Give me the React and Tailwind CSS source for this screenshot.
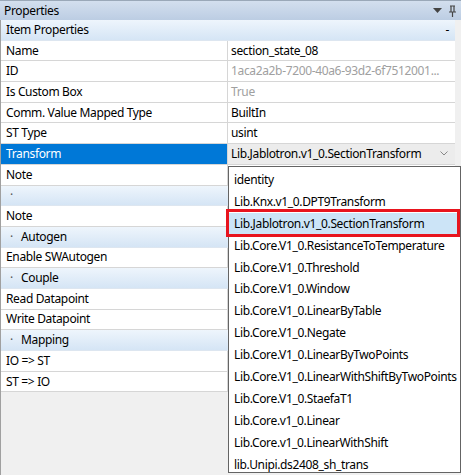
import React from "react";

const rows = [
  { t: "cat", label: "Item Properties", minus: true },
  { label: "Name", value: "section_state_08" },
  { label: "ID", value: "1aca2a2b-7200-40a6-93d2-6f7512001...", dim: true },
  { label: "Is Custom Box", value: "True", dim: true },
  { label: "Comm. Value Mapped Type", value: "BuiltIn" },
  { label: "ST Type", value: "usint" },
  { label: "Transform", value: "Lib.Jablotron.v1_0.SectionTransform", sel: true },
  { label: "Note", value: "" },
  { t: "cat", label: "", dot: true },
  { label: "Note", value: "" },
  { t: "cat", label: "Autogen", dot: true },
  { label: "Enable SWAutogen", value: "" },
  { t: "cat", label: "Couple", dot: true },
  { label: "Read Datapoint", value: "" },
  { label: "Write Datapoint", value: "" },
  { t: "cat", label: "Mapping", dot: true },
  { label: "IO => ST", value: "" },
  { label: "ST => IO", value: "" },
];

const items = [
  "identity",
  "Lib.Knx.v1_0.DPT9Transform",
  "Lib.Jablotron.v1_0.SectionTransform",
  "Lib.Core.V1_0.ResistanceToTemperature",
  "Lib.Core.V1_0.Threshold",
  "Lib.Core.V1_0.Window",
  "Lib.Core.V1_0.LinearByTable",
  "Lib.Core.V1_0.Negate",
  "Lib.Core.V1_0.LinearByTwoPoints",
  "Lib.Core.V1_0.LinearWithShiftByTwoPoints",
  "Lib.Core.V1_0.StaefaT1",
  "Lib.Core.v1_0.Linear",
  "Lib.Core.v1_0.LinearWithShift",
  "lib.Unipi.ds2408_sh_trans",
];

export default function App() {
  return (
    <div
      className="relative w-[461px] h-[475px] overflow-hidden bg-[#f0f0f0] text-[12px] tracking-[-0.35px] text-black"
      style={{ fontFamily: '"Noto Sans", "Open Sans", sans-serif' }}
    >
      <div className="h-[20px] flex items-center justify-between border-t border-[#9aa8b8] bg-gradient-to-b from-[#d3dfee] to-[#bccde3] pl-[4px] pr-[4px]">
        <span className="leading-none">Properties</span>
        <div className="flex items-center gap-[6px]">
          <svg width="9" height="6" viewBox="0 0 9 6"><path d="M0 0h9L4.5 5z" fill="#444" /></svg>
          <svg width="9" height="12" viewBox="0 0 9 12">
            <path d="M2 1h5M3 1v6M6 1v6M1 7h7M4.5 7v5" stroke="#444" strokeWidth="1.2" fill="none" />
          </svg>
        </div>
      </div>
      <div className="flex">
        <div className="w-[455px] border-l border-[#a0a0a0] flex flex-col">
          {rows.map((r, i) =>
            r.t === "cat" ? (
              <div
                key={i}
                className="h-[20.7px] flex items-center justify-between bg-gradient-to-b from-[#eef5fc] to-[#d5e5f5] border-b border-[#dde6f0]"
              >
                <div className="flex items-center">
                  {r.dot ? (
                    <>
                      <span className="w-[20px] pl-[9px] text-[#555] leading-none">·</span>
                      <span>{r.label}</span>
                    </>
                  ) : (
                    <span className="pl-[5px]">{r.label}</span>
                  )}
                </div>
                {r.minus && <span className="pr-[6px] leading-none">-</span>}
              </div>
            ) : (
              <div key={i} className="h-[20.7px] flex border-b border-[#d6d6d6] bg-white">
                <div
                  className={
                    "w-[227px] flex items-center pl-[5px] border-r border-[#d6d6d6] " +
                    (r.sel ? "bg-[#0078d7] text-white" : "")
                  }
                >
                  {r.label}
                </div>
                <div
                  className={
                    "flex-1 flex items-center pl-[3px] whitespace-nowrap overflow-hidden " +
                    (r.dim ? "text-[#a0a0a0] " : "") +
                    (r.sel ? "bg-[#ececec] justify-between pr-[7px]" : "")
                  }
                >
                  <span>{r.value}</span>
                  {r.sel && (
                    <svg width="8" height="5" viewBox="0 0 8 5">
                      <path d="M0.5 0.5L4 4L7.5 0.5" stroke="#888" fill="none" />
                    </svg>
                  )}
                </div>
              </div>
            )
          )}
        </div>
      </div>
      <div className="absolute left-[0px] top-[392px] bottom-0 border-l border-[#a0a0a0]" />
      <div className="absolute left-[228px] top-[166px] w-[233px] h-[307px] bg-white border border-[#646464] flex flex-col pt-[2px]">
        {items.map((it, i) => (
          <div
            key={i}
            className={
              "h-[21.9px] shrink-0 flex items-center pl-[5px] whitespace-nowrap " +
              (i === 2 ? "bg-[#cce4f7]" : "")
            }
          >
            {it}
          </div>
        ))}
      </div>
      <div className="absolute left-[226px] top-[209px] w-[234px] h-[28px] border-[3px] border-[#e8141e]" />
    </div>
  );
}
